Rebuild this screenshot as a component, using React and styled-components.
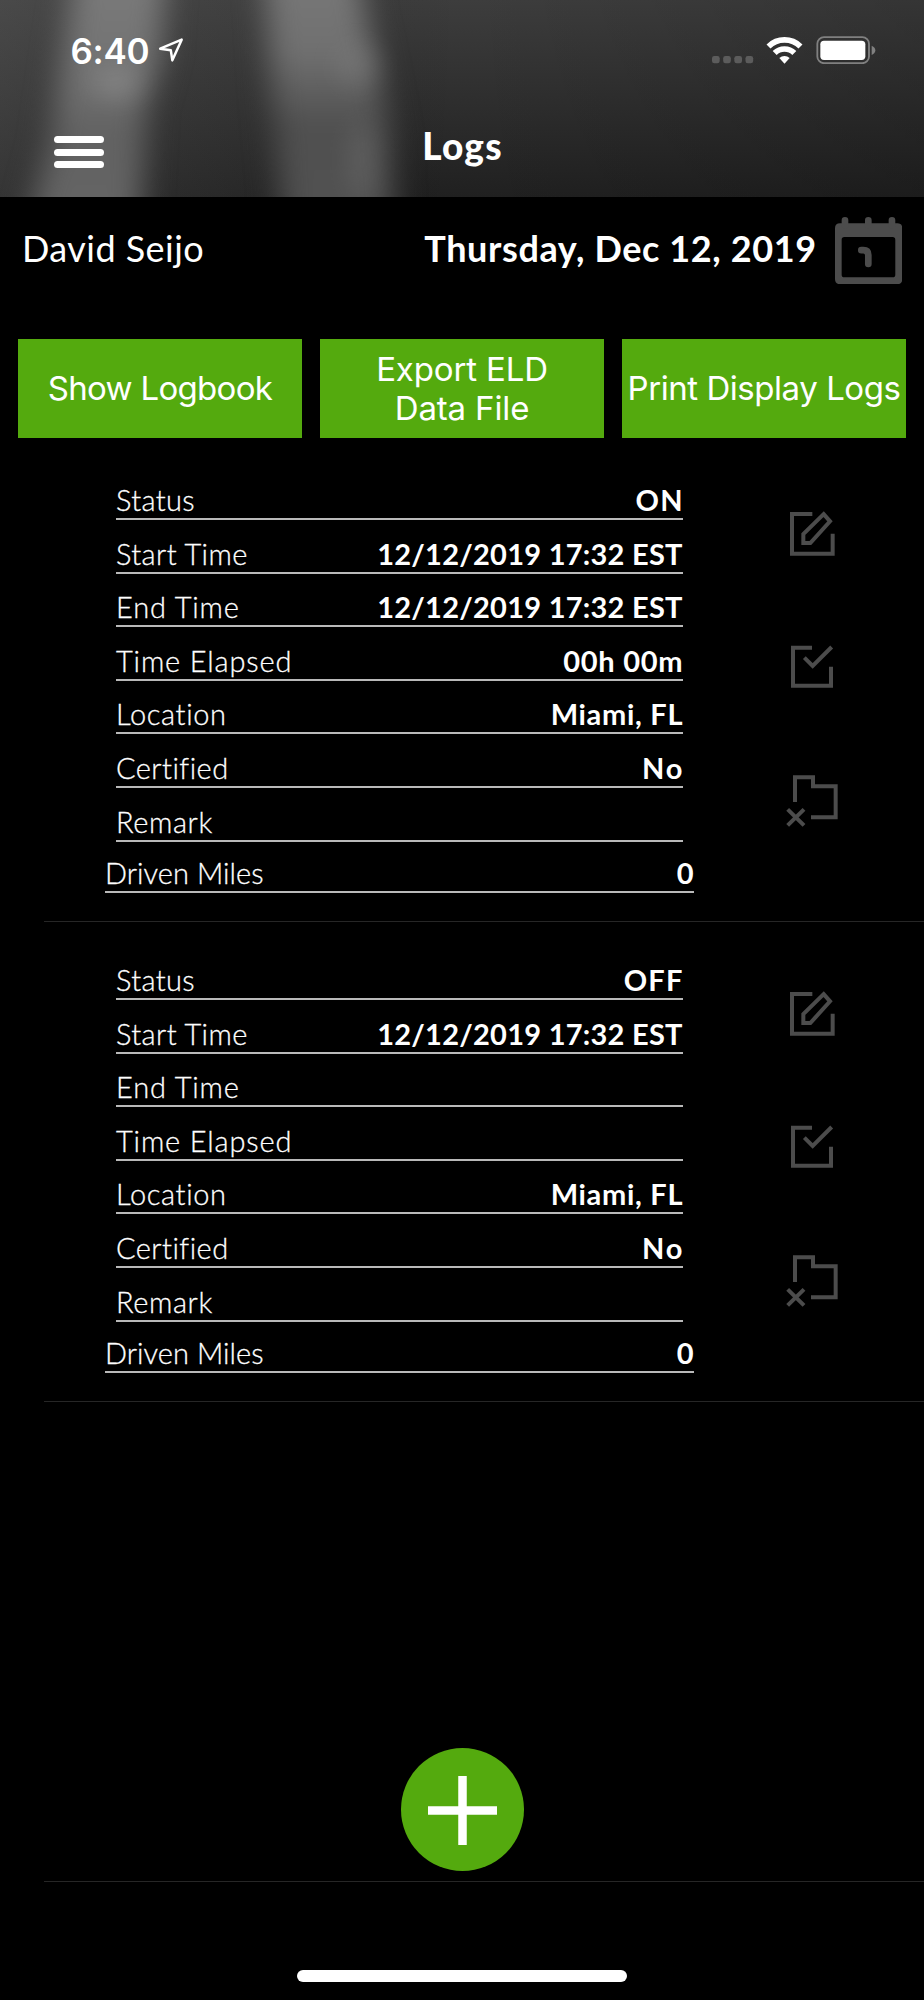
import React from 'react';
import styled, { createGlobalStyle } from 'styled-components';

const GREEN = '#54aa0e';
const ICON = '#4c4c4c';

const rows = (status, end, elapsed) => [
    { label: 'Status', track: 0.35, value: status, valueTrack: 1.3 },
    { label: 'Start Time', track: 0.4, value: '12/12/2019 17:32 EST', valueTrack: 0.26 },
    { label: 'End Time', track: 0.85, value: end, valueTrack: 0.26 },
    { label: 'Time Elapsed', track: 0.85, value: elapsed, valueTrack: 0.7 },
    { label: 'Location', track: 0.65, value: 'Miami, FL', valueTrack: 0.7 },
    { label: 'Certified', track: 0.45, value: 'No', valueTrack: 2 },
    { label: 'Remark', track: 0.6, value: '', valueTrack: 0 },
];

const logs = [
    { id: 1, rows: rows('ON', '12/12/2019 17:32 EST', '00h 00m'), miles: '0' },
    { id: 2, rows: rows('OFF', '', ''), miles: '0' },
];

const HeaderBackdrop = () => (
    <Backdrop viewBox="0 0 924 197" preserveAspectRatio="none">
        <defs>
            <linearGradient id="base" x1="0" y1="0" x2="0" y2="1">
                <stop offset="0" stopColor="#3d3d3d" />
                <stop offset="1" stopColor="#202020" />
            </linearGradient>
            <linearGradient id="side" x1="0" y1="0" x2="1" y2="0">
                <stop offset="0" stopColor="#666" stopOpacity="0.3" />
                <stop offset="0.3" stopColor="#555" stopOpacity="0.12" />
                <stop offset="0.5" stopColor="#000" stopOpacity="0" />
                <stop offset="1" stopColor="#000" stopOpacity="0.14" />
            </linearGradient>
            <linearGradient id="beam" x1="0" y1="0" x2="0" y2="1">
                <stop offset="0" stopColor="#7e7e7e" />
                <stop offset="0.45" stopColor="#717171" />
                <stop offset="0.6" stopColor="#626262" />
                <stop offset="1" stopColor="#666" />
            </linearGradient>
            <linearGradient id="beam2" x1="0" y1="0" x2="0" y2="1">
                <stop offset="0" stopColor="#7c7c7c" />
                <stop offset="0.35" stopColor="#707070" />
                <stop offset="0.58" stopColor="#505050" />
                <stop offset="1" stopColor="#525252" />
            </linearGradient>
            <filter id="soft" x="-50%" y="-30%" width="200%" height="160%" colorInterpolationFilters="sRGB">
                <feGaussianBlur stdDeviation="15 10" />
            </filter>
            <filter id="softer" x="-100%" y="-100%" width="300%" height="300%" colorInterpolationFilters="sRGB">
                <feGaussianBlur stdDeviation="13" />
            </filter>
        </defs>
        <rect width="924" height="197" fill="url(#base)" />
        <rect width="924" height="197" fill="url(#side)" />
        <path d="M80 -60 L168 -60 L160 60 L146 110 L138 260 L18 260 L50 140 Z" fill="url(#beam)" filter="url(#soft)" />
        <path d="M262 -60 L350 -60 L376 60 L390 130 L396 260 L286 260 L272 100 Z" fill="url(#beam2)" filter="url(#soft)" />
        <ellipse cx="116" cy="82" rx="22" ry="14" fill="#999" opacity="0.5" filter="url(#softer)" />
        <ellipse cx="358" cy="66" rx="20" ry="18" fill="#888" opacity="0.35" filter="url(#softer)" />
        <ellipse cx="362" cy="160" rx="12" ry="40" fill="#777" opacity="0.4" filter="url(#softer)" />
    </Backdrop>
);

const LocationArrow = () => (
    <svg width="26" height="26" viewBox="477 113 78 78">
        <path d="M483.500 148 L548 121 L520 183 L515.500 153 Z" fill="none" stroke="#fff" strokeWidth="7.500" strokeLinejoin="round" />
    </svg>
);

const StatusIcons = () => (
    <svg width="164" height="28" viewBox="752 108 492 84">
        {[752, 785.5, 819, 852.5].map((x) => (
            <rect key={x} x={x} y="168" width="23" height="22" rx="7" fill="#5c5c5c" />
        ))}
        <g fill="none" stroke="#fff" strokeWidth="17">
            <path d="M921.500 139.500 A68.500 68.500 0 0 1 1017.500 139.500" />
            <path d="M940 159 A42 42 0 0 1 999 159" />
        </g>
        <path d="M969.500 191 L954 174 A23 23 0 0 1 985 174 Z" fill="#fff" />
        <rect x="1068" y="111.500" width="155" height="78" rx="20" fill="none" stroke="#808080" strokeWidth="5.500" />
        <rect x="1077" y="122" width="135" height="58" rx="11" fill="#fff" />
        <path d="M1231 137 Q1242 142 1242 151 Q1242 160 1231 165 Z" fill="#808080" />
    </svg>
);

const CalendarIcon = () => (
    <svg width="67.300" height="67.300" viewBox="1118 50 202 202">
        <path
            fill={ICON}
            fillRule="evenodd"
            d="M1133 69 H1305 Q1320 69 1320 84 V236 Q1320 252 1304 252 H1134 Q1118 252 1118 236 V84 Q1118 69 1133 69 Z M1146 110 Q1138 110 1138 118 V223 Q1138 231 1146 231 H1291 Q1299 231 1299 223 V118 Q1299 110 1291 110 Z"
        />
        <path d="M1148 75 V60 M1218 75 V60 M1289 75 V60" stroke={ICON} strokeWidth="20" strokeLinecap="round" />
        <path d="M1197 149.500 H1203 Q1218 149.500 1218 164 V191" fill="none" stroke={ICON} strokeWidth="20" strokeLinecap="round" />
    </svg>
);

const EditIcon = () => (
    <ActionSvg viewBox="45 51 165 165">
        <path d="M127 72 H66 V191.500 H188 V131" />
        <path d="M161 72.500 L180 94 L121 159 H100 V132 Z" />
    </ActionSvg>
);

const CheckIcon = () => (
    <ActionSvg viewBox="45 451 165 165">
        <path d="M126 474 H69 V588 H183 V531" />
        <path d="M103 504 L128 529 L185 472" />
    </ActionSvg>
);

const FolderRemoveIcon = () => (
    <ActionSvg viewBox="45 849 165 165">
        <path d="M75 936 V862 H129 V889 H197 V982 H123" />
        <path d="M53 958 L102 1006 M102 958 L53 1006" />
    </ActionSvg>
);

const LogEntry = ({ log }) => {
    return (
        <Entry>
            <Fields>
                {log.rows.map((row, index) => {
                    return (
                        <Row key={index}>
                            <Label $track={row.track}>{row.label}</Label>
                            <Value $track={row.valueTrack}>{row.value}</Value>
                        </Row>
                    );
                })}
                <Row $wide>
                    <Label $track={0.05}>Driven Miles</Label>
                    <Value $track={0}>{log.miles}</Value>
                </Row>
            </Fields>
            <Actions>
                <EditIcon />
                <CheckIcon />
                <FolderRemoveIcon />
            </Actions>
        </Entry>
    );
};

const App = () => {
    return (
        <Screen>
            <GlobalStyle />
            <Header>
                <HeaderBackdrop />
                <StatusBar>
                    <Clock>6:40</Clock>
                    <LocationArrow />
                    <Spacer />
                    <StatusIcons />
                </StatusBar>
                <NavBar>
                    <Menu>
                        <MenuLine />
                        <MenuLine />
                        <MenuLine />
                    </Menu>
                    <Title>Logs</Title>
                </NavBar>
            </Header>
            <DriverRow>
                <Driver>David Seijo</Driver>
                <LogDate>Thursday, Dec 12, 2019</LogDate>
                <CalendarIcon />
            </DriverRow>
            <Buttons>
                <Button $track={-0.69}>Show Logbook</Button>
                <Button $track={-0.15} $top={2}>
                    Export ELD
                    <br />
                    Data File
                </Button>
                <Button $track={-0.45}>Print Display Logs</Button>
            </Buttons>
            <List>
                {logs.map((log) => (
                    <LogEntry key={log.id} log={log} />
                ))}
                <Entry />
            </List>
            <AddButton>
                <svg width="69" height="69" viewBox="0 0 69 69">
                    <path d="M34.500 0 V69 M0 34.500 H69" stroke="#fff" strokeWidth="8.500" />
                </svg>
            </AddButton>
            <HomeIndicator />
        </Screen>
    );
};

const GlobalStyle = createGlobalStyle`
    * {
        box-sizing: border-box;
    }
    body {
        margin: 0;
        background: #000;
    }
    svg {
        display: block;
        flex-shrink: 0;
    }
`;

const Screen = styled.div`
    position: relative;
    width: 924px;
    height: 2000px;
    overflow: hidden;
    background: #000;
    color: #fff;
    font-family: Lato, 'Open Sans', sans-serif;
`;

const Header = styled.header`
    position: relative;
    height: 197px;
    overflow: hidden;
`;

const Backdrop = styled.svg`
    position: absolute;
    inset: 0;
    width: 100%;
    height: 100%;
`;

const StatusBar = styled.div`
    position: relative;
    display: flex;
    align-items: center;
    height: 100px;
    padding: 0 48px 0 70.500px;
`;

const Clock = styled.div`
    margin-right: 9px;
    padding-top: 2px;
    font: 600 35px/42px Inter, sans-serif;
    letter-spacing: -0.3px;
`;

const Spacer = styled.div`
    flex: 1;
`;

const NavBar = styled.nav`
    position: relative;
    display: grid;
    grid-template-columns: 1fr auto 1fr;
    align-items: start;
    padding: 24px 54px 0;
`;

const Menu = styled.div`
    display: flex;
    flex-direction: column;
    gap: 5.5px;
    width: 50px;
    padding-top: 12px;
`;

const MenuLine = styled.span`
    height: 7px;
    border-radius: 3.5px;
    background: #fff;
`;

const Title = styled.h1`
    margin: 0 -1px 0 0;
    font-size: 37px;
    line-height: 43px;
    font-weight: 900;
    letter-spacing: 1.2px;
`;

const DriverRow = styled.section`
    display: flex;
    align-items: flex-start;
    height: 142px;
    padding: 19.500px 22px 0 22px;
    font-size: 36px;
    line-height: 44px;
`;

const Driver = styled.div`
    flex: 1;
    padding-top: 9.500px;
    letter-spacing: 0.45px;
`;

const LogDate = styled.div`
    padding-top: 9.500px;
    margin-right: 18px;
    font-weight: 700;
    letter-spacing: 0.61px;
`;

const Buttons = styled.div`
    display: grid;
    grid-template-columns: repeat(3, 1fr);
    gap: 18px;
    padding: 0 18px;
`;

const Button = styled.button`
    height: 98.700px;
    padding: ${(props) => props.$top || 0}px 0 0;
    border: 0;
    background: ${GREEN};
    color: #fff;
    font: 400 33px/39.500px Inter, sans-serif;
    letter-spacing: ${(props) => props.$track}px;
    white-space: nowrap;
`;

const List = styled.main`
    padding: 4.300px 0 0 44px;
`;

const Entry = styled.article`
    display: flex;
    justify-content: space-between;
    height: 480px;
    padding: 24.400px 84px 0 61px;
    border-bottom: 1px solid #262626;
`;

const Fields = styled.div`
    width: 589px;
`;

const Row = styled.div`
    display: flex;
    justify-content: space-between;
    align-items: flex-end;
    height: ${(props) => (props.$wide ? 51.2 : 53.6)}px;
    margin: 0 ${(props) => (props.$wide ? 0 : 11)}px;
    border-bottom: 2px solid #b9b9b9;
    font-size: 29px;
    line-height: 36px;
`;

const Label = styled.span`
    font-weight: 300;
    letter-spacing: ${(props) => props.$track}px;
    -webkit-text-stroke: 0.3px #fff;
`;

const Value = styled.span`
    margin-right: ${(props) => 0.5 - props.$track}px;
    font-weight: 700;
    letter-spacing: ${(props) => props.$track}px;
`;

const Actions = styled.div`
    display: flex;
    flex-direction: column;
    gap: 78px;
    padding-top: 40.600px;
`;

const ActionSvg = styled.svg`
    width: 55px;
    height: 55px;
    fill: none;
    stroke: ${ICON};
    stroke-width: 12;
`;

const AddButton = styled.button`
    position: absolute;
    left: 401px;
    top: 1747.500px;
    display: flex;
    align-items: center;
    justify-content: center;
    width: 123px;
    height: 123px;
    padding: 3px 0 0;
    border: 0;
    border-radius: 50%;
    background: ${GREEN};
`;

const HomeIndicator = styled.div`
    position: absolute;
    left: 297px;
    bottom: 18px;
    width: 330px;
    height: 12px;
    border-radius: 6px;
    background: #fff;
`;

export default App;
